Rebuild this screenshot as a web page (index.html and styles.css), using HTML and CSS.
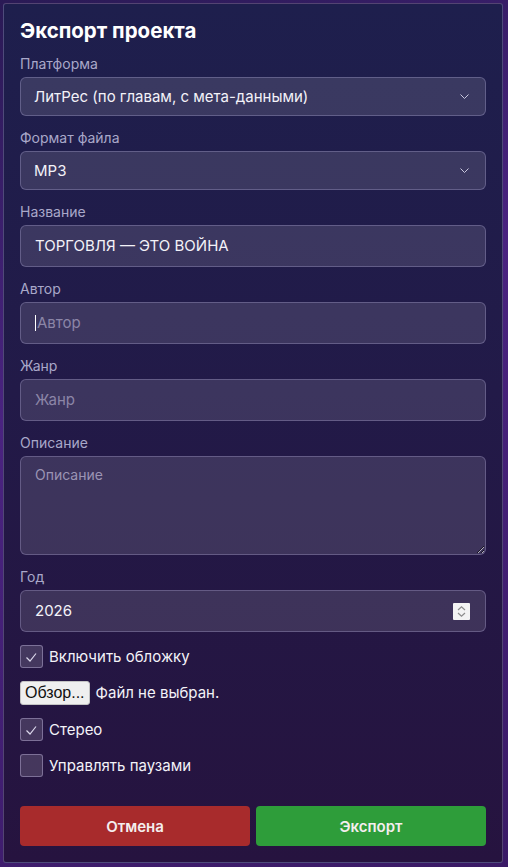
FILE: index.html
```html
<!DOCTYPE html>
<html lang="ru">
<head>
<meta charset="utf-8">
<title>Экспорт проекта</title>
<link rel="stylesheet" href="styles.css">
</head>
<body>
<div class="modal">
  <form class="form">
    <h2 class="title">Экспорт проекта</h2>

    <div class="group">
      <label class="label">Платформа</label>
      <div class="field field-select">
        <span class="value">ЛитРес (по главам, с мета-данными)</span>
        <svg class="chev" width="9" height="5" viewBox="0 0 9 5"><path d="M0.5 0.5 L4.5 4.5 L8.5 0.5" fill="none" stroke="#c9c8de" stroke-width="1"/></svg>
      </div>
    </div>

    <div class="group">
      <label class="label">Формат файла</label>
      <div class="field field-select">
        <span class="value">MP3</span>
        <svg class="chev" width="9" height="5" viewBox="0 0 9 5"><path d="M0.5 0.5 L4.5 4.5 L8.5 0.5" fill="none" stroke="#c9c8de" stroke-width="1"/></svg>
      </div>
    </div>

    <div class="group">
      <label class="label">Название</label>
      <div class="field field-input">
        <input class="inp" type="text" value="ТОРГОВЛЯ — ЭТО ВОЙНА">
      </div>
    </div>

    <div class="group">
      <label class="label">Автор</label>
      <div class="field field-input">
        <span class="caret"></span>
        <input class="inp" type="text" placeholder="Автор">
      </div>
    </div>

    <div class="group">
      <label class="label">Жанр</label>
      <div class="field field-input">
        <input class="inp" type="text" placeholder="Жанр">
      </div>
    </div>

    <div class="group">
      <label class="label">Описание</label>
      <textarea class="field area" placeholder="Описание"></textarea>
    </div>

    <div class="group">
      <label class="label">Год</label>
      <div class="field field-input">
        <input class="inp" type="text" value="2026">
        <span class="spin">
          <svg width="17" height="17" viewBox="0 0 17 17"><path d="M5 7 L8.5 3.8 L12 7" fill="none" stroke="#8c8c8c" stroke-width="1.2"/><path d="M5 10 L8.5 13.2 L12 10" fill="none" stroke="#8c8c8c" stroke-width="1.2"/></svg>
        </span>
      </div>
    </div>

    <label class="row">
      <input class="cb" type="checkbox" checked>
      <span class="row-text">Включить обложку</span>
    </label>

    <div class="row">
      <button type="button" class="file-btn">Обзор...</button>
      <span class="row-text">Файл не выбран.</span>
    </div>

    <label class="row">
      <input class="cb" type="checkbox" checked>
      <span class="row-text">Стерео</span>
    </label>

    <label class="row">
      <input class="cb" type="checkbox">
      <span class="row-text">Управлять паузами</span>
    </label>

    <div class="actions">
      <button type="button" class="btn btn-cancel">Отмена</button>
      <button type="button" class="btn btn-export">Экспорт</button>
    </div>
  </form>
</div>
</body>
</html>
```

FILE: styles.css
```css
* { box-sizing: border-box; }

html, body {
  margin: 0;
  height: 100%;
}

body {
  background: linear-gradient(160deg, #2a1a55 0%, #4a2380 40%, #3a1a66 100%);
  font-family: Inter, "Noto Sans", "DejaVu Sans", sans-serif;
  padding: 3px 0 0 3px;
}

.modal {
  width: 500px;
  height: 860px;
  border: 1px solid rgba(170, 160, 210, 0.35);
  border-radius: 3px;
  background: linear-gradient(180deg, #1e1f4d 0%, #221a48 45%, #26133f 100%);
  padding: 16px;
}

.form {
  display: flex;
  flex-direction: column;
  gap: 13px;
}

.title {
  margin: 0;
  font-size: 20.5px;
  line-height: 22px;
  font-weight: 700;
  color: #ffffff;
}

.group {
  display: flex;
  flex-direction: column;
}

.label {
  font-size: 14px;
  line-height: 18px;
  color: #a9a8c9;
  margin-bottom: 4px;
}

.field {
  display: flex;
  align-items: center;
  width: 100%;
  background: rgba(255, 255, 255, 0.12);
  border: 1px solid rgba(200, 195, 240, 0.28);
  border-radius: 6px;
  color: #f3f2f8;
  font-family: inherit;
  font-size: 15px;
}

.field-select {
  height: 39px;
  padding: 0 16px 0 13px;
  justify-content: space-between;
}

.field-input {
  height: 42px;
  padding: 0 15px 0 14px;
}

.value {
  line-height: 20px;
}

.inp {
  flex: 1;
  min-width: 0;
  border: 0;
  outline: none;
  background: transparent;
  color: #f3f2f8;
  font-family: inherit;
  font-size: 15px;
  padding: 0;
  line-height: 20px;
}

.inp::placeholder {
  color: rgba(220, 215, 240, 0.5);
}

.caret {
  width: 1px;
  height: 16px;
  background: #ffffff;
  margin-right: 1px;
}

.area {
  display: block;
  height: 99px;
  padding: 9px 14px;
  font-size: 14px;
  line-height: 18px;
  resize: vertical;
  outline: none;
  color-scheme: dark;
}

.area::placeholder {
  color: rgba(220, 215, 240, 0.6);
}

.spin {
  display: flex;
  width: 17px;
  height: 17px;
  background: #f3f3f3;
  border-radius: 1px;
}

.row {
  display: flex;
  align-items: center;
  gap: 6px;
  min-height: 23px;
  color: #f3f2f8;
  font-size: 15px;
}

.row-text {
  line-height: 20px;
}

.cb {
  appearance: none;
  -webkit-appearance: none;
  margin: 0;
  width: 23px;
  height: 23px;
  flex: none;
  border: 1px solid rgba(210, 200, 240, 0.4);
  border-radius: 3px;
  background-color: rgba(255, 255, 255, 0.15);
}

.cb:checked {
  background-image: url("data:image/svg+xml,%3Csvg xmlns='http://www.w3.org/2000/svg' width='21' height='21' viewBox='0 0 21 21'%3E%3Cpath d='M5.5 11.5 L9 15 L15 7.5' fill='none' stroke='%23dcd8ec' stroke-width='1.2'/%3E%3C/svg%3E");
  background-repeat: no-repeat;
  background-position: center;
}

.file-btn {
  height: 24px;
  padding: 0 4px;
  font-family: "Liberation Sans", Arial, sans-serif;
  font-size: 16px;
  color: #111111;
  background: #efefef;
  border: 1px solid #c4c4c4;
  border-radius: 3px;
}

.actions {
  display: flex;
  gap: 6px;
  margin-top: 16px;
}

.btn {
  flex: 1;
  height: 40px;
  border: 0;
  border-radius: 4px;
  color: #f4eeee;
  font-family: inherit;
  font-size: 15px;
  font-weight: 600;
}

.btn-cancel {
  background: #a82b2c;
}

.btn-export {
  background: #2e9d3a;
}
```
